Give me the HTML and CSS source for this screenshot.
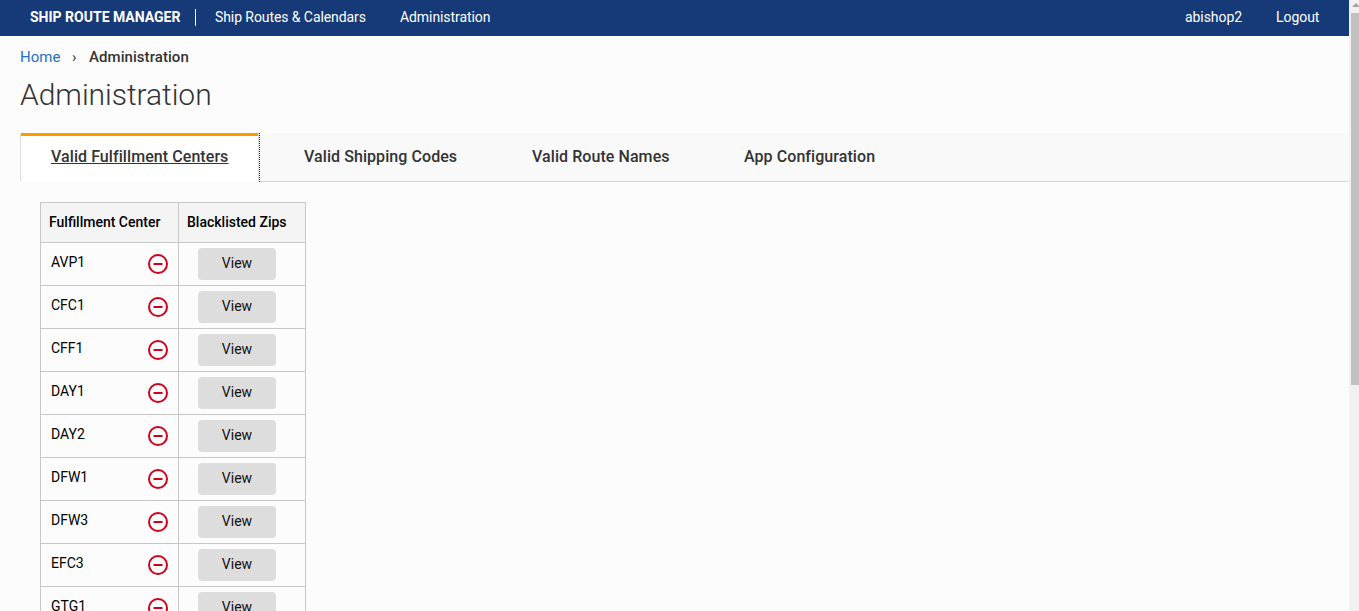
FILE: index.html
```html
<!DOCTYPE html>
<html lang="en">
<head>
<meta charset="utf-8">
<title>Ship Route Manager</title>
<link rel="stylesheet" href="styles.css">
</head>
<body>
<svg width="0" height="0" class="defs">
  <symbol id="remove" viewBox="0 0 20 20"><circle cx="10" cy="10" r="9" fill="none" stroke="#d0021b" stroke-width="2"/><path d="M5.5 10h9" stroke="#d0021b" stroke-width="2"/></symbol>
</svg>
<div class="app">
  <div class="page">
    <header class="topbar">
      <span class="brand">SHIP ROUTE MANAGER</span>
      <nav class="menu"><a class="routes">Ship Routes &amp; Calendars</a><a>Administration</a></nav>
      <nav class="user"><a class="name">abishop2</a><a class="logout">Logout</a></nav>
    </header>
    <div class="crumbs"><a class="home">Home</a><span class="sep">›</span><span class="here">Administration</span></div>
    <h1 class="title">Administration</h1>
    <div class="tabs">
      <div class="focus"><a class="tab active"><span class="label">Valid Fulfillment Centers</span></a></div>
      <a class="tab shipping">Valid Shipping Codes</a>
      <a class="tab names">Valid Route Names</a>
      <a class="tab config">App Configuration</a>
    </div>
    <table class="centers">
      <colgroup><col class="col-center"><col class="col-zips"></colgroup>
      <thead><tr><th>Fulfillment Center</th><th>Blacklisted Zips</th></tr></thead>
      <tbody>
        <tr><td><div class="center"><span>AVP1</span><svg class="icon"><use href="#remove"/></svg></div></td><td><button class="view">View</button></td></tr>
        <tr><td><div class="center"><span>CFC1</span><svg class="icon"><use href="#remove"/></svg></div></td><td><button class="view">View</button></td></tr>
        <tr><td><div class="center"><span>CFF1</span><svg class="icon"><use href="#remove"/></svg></div></td><td><button class="view">View</button></td></tr>
        <tr><td><div class="center"><span>DAY1</span><svg class="icon"><use href="#remove"/></svg></div></td><td><button class="view">View</button></td></tr>
        <tr><td><div class="center"><span>DAY2</span><svg class="icon"><use href="#remove"/></svg></div></td><td><button class="view">View</button></td></tr>
        <tr><td><div class="center"><span>DFW1</span><svg class="icon"><use href="#remove"/></svg></div></td><td><button class="view">View</button></td></tr>
        <tr><td><div class="center"><span>DFW3</span><svg class="icon"><use href="#remove"/></svg></div></td><td><button class="view">View</button></td></tr>
        <tr><td><div class="center"><span>EFC3</span><svg class="icon"><use href="#remove"/></svg></div></td><td><button class="view">View</button></td></tr>
        <tr><td><div class="center"><span>GTG1</span><svg class="icon"><use href="#remove"/></svg></div></td><td><button class="view">View</button></td></tr>
      </tbody>
    </table>
  </div>
  <div class="scrollbar">
    <svg class="arrow" width="8" height="4" viewBox="0 0 8 4"><path d="M1 4l4-4 4 4z" fill="#a3a3a3"/></svg>
    <div class="thumb"></div>
  </div>
</div>
</body>
</html>
```

FILE: styles.css
```css
* { box-sizing: border-box; }
body { margin: 0; background: #fcfcfc; font-family: Roboto, "Liberation Sans", sans-serif; font-size: 14px; color: #000; overflow: hidden; }
.defs { display: block; }
.app { display: flex; height: 611px; overflow: hidden; }
.page { flex: 1; min-width: 0; overflow: hidden; }
.topbar { display: flex; align-items: center; height: 36px; padding: 0 30px; background: #163977; color: #fff; line-height: 17px; white-space: nowrap; }
.brand { width: 166px; font-weight: 700; border-right: 1px solid #fff; margin-right: 19px; margin-top: -1px; }
.menu, .user { display: flex; margin-top: -2px; }
.menu { letter-spacing: -0.08px; }
.routes { width: 185px; }
.user { margin-left: auto; letter-spacing: -0.06px; }
.name { width: 91px; }
.logout { width: 43px; }
.crumbs { display: flex; height: 42px; padding: 12px 0 0 20px; font-size: 15px; line-height: 18px; color: #333; }
.home { width: 52px; color: #1f70c1; }
.sep { width: 17px; }
.here { font-weight: 500; letter-spacing: 0.06px; }
.title { margin: 0; padding-left: 20px; height: 55px; font-size: 30px; line-height: 34px; font-weight: 300; letter-spacing: -0.04px; color: #333; }
.tabs { display: flex; height: 49px; margin-left: 20px; background: #f9f9f9; border-bottom: 1px solid #d8d8d8; font-size: 16px; line-height: 20px; font-weight: 500; letter-spacing: 0.07px; color: #333; }
.tab { padding-top: 14px; white-space: nowrap; }
.focus { width: 240px; height: 49px; background: #fcfcfc; border-right: 1px dotted #222; }
.active { display: block; height: 49px; padding-left: 30px; background: linear-gradient(#ff9900 3px, #fff 3px) padding-box; border: solid #ddd; border-width: 0 1px; border-radius: 0 0 3px 3px; }
.label { text-decoration: underline; }
.shipping { width: 272px; padding-left: 44px; }
.names { width: 212px; }
.centers { width: 266px; margin: 20px 0 0 40px; border-collapse: separate; border-spacing: 0; table-layout: fixed; border-left: 1px solid #c8c8c8; border-top: 1px solid #c8c8c8; }
.col-center { width: 138px; }
.col-zips { width: 127px; }
.centers th { height: 40px; padding: 0 0 1px 8px; background: #f4f4f4; font-weight: 500; text-align: left; }
.centers th, .centers td { border-right: 1px solid #c8c8c8; border-bottom: 1px solid #c8c8c8; }
.centers td { height: 43px; padding: 0; }
.center { display: flex; justify-content: space-between; align-items: center; padding: 0 10px; }
.center span { margin-top: -5px; }
.icon { width: 20px; height: 20px; }
.view { display: block; width: 78px; height: 32px; margin-left: 19px; padding: 0 0 2px; border: 0; border-radius: 4px; background: #ddd; color: #111; font: 14px/30px Roboto, sans-serif; }
.scrollbar { width: 10px; background: #f1f1f1; padding: 3px 0 0 2px; overflow: hidden; }
.arrow { display: block; }
.thumb { height: 372px; margin-top: 6px; background: #c1c1c1; }
```
